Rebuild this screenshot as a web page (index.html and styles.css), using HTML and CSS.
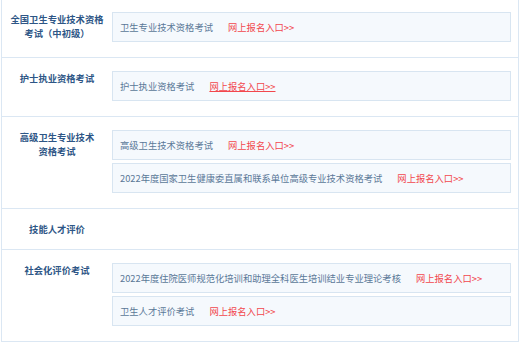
FILE: index.html
```html
<!DOCTYPE html>
<html>
<head>
    <title>考试报名</title>
    <meta charset="utf-8">
    <meta name="viewport" content="width=device-width, initial-scale=1.0">
    <link rel="stylesheet" href="styles.css">
</head>
<body>
    <div class="lista">
        <div class="linha">
            <div class="titulo">全国卫生专业技术资格<br>考试（中初级）</div>
            <div class="itens">
                <div class="item"><span>卫生专业技术资格考试</span><a class="link" href="#">网上报名入口&gt;&gt;</a></div>
            </div>
        </div>
        <div class="linha">
            <div class="titulo">护士执业资格考试</div>
            <div class="itens">
                <div class="item"><span>护士执业资格考试</span><a class="link ativo" href="#">网上报名入口&gt;&gt;</a></div>
            </div>
        </div>
        <div class="linha">
            <div class="titulo">高级卫生专业技术<br>资格考试</div>
            <div class="itens">
                <div class="item"><span>高级卫生技术资格考试</span><a class="link" href="#">网上报名入口&gt;&gt;</a></div>
                <div class="item"><span>2022年度国家卫生健康委直属和联系单位高级专业技术资格考试</span><a class="link" href="#">网上报名入口&gt;&gt;</a></div>
            </div>
        </div>
        <div class="linha vazia">
            <div class="titulo">技能人才评价</div>
            <div class="itens"></div>
        </div>
        <div class="linha">
            <div class="titulo">社会化评价考试</div>
            <div class="itens">
                <div class="item"><span>2022年度住院医师规范化培训和助理全科医生培训结业专业理论考核</span><a class="link" href="#">网上报名入口&gt;&gt;</a></div>
                <div class="item"><span>卫生人才评价考试</span><a class="link" href="#">网上报名入口&gt;&gt;</a></div>
            </div>
        </div>
    </div>
</body>
</html>
```
FILE: styles.css
```css
body {
    margin: 0;
    background: white;
    font-family: "Noto Sans CJK SC", "Noto Sans", sans-serif;
    font-size: 9.3px;
}
.lista {
    width: 516px;
    margin-left: 1px;
    margin-top: -1px;
    border-left: 1px solid #dbe7f3;
    border-right: 1px solid #dbe7f3;
}
.linha {
    display: flex;
    padding: 13px 0 15px 0;
    border-bottom: 1px solid #dbe7f3;
}
.linha.vazia {
    padding-bottom: 13px;
}
.titulo {
    width: 110px;
    flex-shrink: 0;
    text-align: center;
    font-weight: bold;
    color: #2e5686;
    line-height: 14px;
}
.itens {
    flex: 1;
    display: flex;
    flex-direction: column;
    gap: 3px;
    margin-right: 7px;
}
.item {
    height: 28px;
    display: flex;
    align-items: center;
    padding-left: 7px;
    background: #f5f9fd;
    border: 1px solid #d8e5f1;
    color: #5a7898;
}
.link {
    margin-left: 15px;
    color: #f2474d;
    text-decoration: none;
}
.link.ativo {
    text-decoration: underline;
}
```
